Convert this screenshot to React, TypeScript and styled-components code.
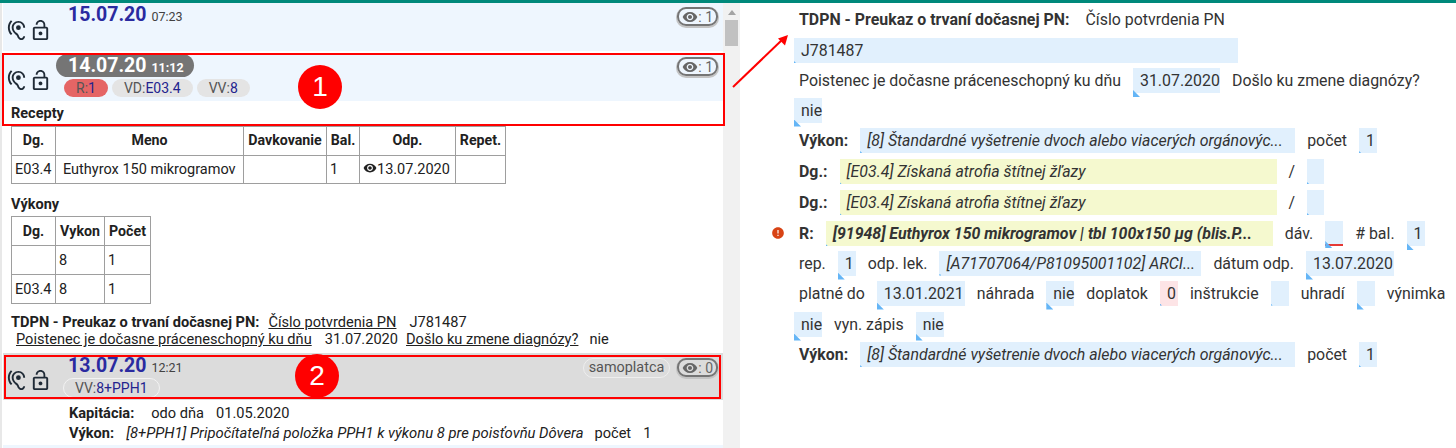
import React from "react";
import styled, { createGlobalStyle } from "styled-components";
import { MdHearing, MdLockOpen, MdVisibility, MdError } from "react-icons/md";

const Global = createGlobalStyle`
  html, body { margin: 0; padding: 0; background: #fff; }
  body { font-family: Roboto, "Liberation Sans", sans-serif; font-size: 14.6px; color: #212121; overflow: hidden; }
`;
const Page = styled.div`
  position: relative; width: 1456px; height: 448px; overflow: hidden;
  border-top: 3px solid #00897b; box-sizing: border-box; display: flex;
`;
const Left = styled.div`
  width: 723px; height: 445px; flex: none; overflow: hidden; padding-left: 1px; box-sizing: border-box;
  border-left: 2px solid #e8e8e8;
`;
const Scrollbar = styled.div`
  width: 17px; flex: none; height: 445px; background: #f1f1f1; display: flex; flex-direction: column; align-items: center;
  &::before { content: ""; margin-top: 7px; border: 4px solid transparent; border-top: 0; border-bottom: 5px solid #a3a3a3; }
  &::after { content: ""; margin-top: 5px; width: 13px; height: 26px; background: #c1c1c1; }
`;
const Head = styled.div<{ $h: number; $grey?: boolean; $mb?: number; $mt?: number }>`
  height: ${p => p.$h}px; margin: ${p => p.$mt ?? 0}px 0 ${p => p.$mb ?? 0}px; display: flex; position: relative;
  background: ${p => (p.$grey ? "#dcdcdc" : "#eef6fe")};
`;
const Icons = styled.div<{ $top: number }>`
  width: 55px; flex: none; display: flex; align-items: flex-start; padding: ${p => p.$top}px 0 0 2px; box-sizing: border-box; gap: 1px;
  color: #1f2a36;
  svg { display: block; flex: none; }
`;
const Info = styled.div<{ $pt: number }>`
  padding-top: ${p => p.$pt}px; display: flex; flex-direction: column; align-items: flex-start;
`;
const DateLine = styled.div<{ $pill?: boolean }>`
  font-size: 19.5px; font-weight: 700; white-space: nowrap;
  line-height: ${p => (p.$pill ? 23 : 22)}px; height: ${p => (p.$pill ? 23 : 22)}px;
  color: ${p => (p.$pill ? "#fff" : "#2a2aa0")};
  ${p => p.$pill ? "background:#757575;border-radius:12px;padding:0 10px 0 12px;margin:-1px 0 0 -2px;" : "margin-left:10px;"}
`;
const Time = styled.span<{ $bold?: boolean }>`
  font-size: 12.5px; font-weight: ${p => (p.$bold ? 700 : 400)}; margin-left: 5px;
  color: ${p => (p.$bold ? "#fff" : "#424242")};
`;
const Chips = styled.div<{ $mt: number; $ml: number }>`
  display: flex; gap: 4px; margin: ${p => p.$mt}px 0 0 ${p => p.$ml}px;
`;
const Chip = styled.span<{ $red?: boolean; $outline?: boolean }>`
  font-size: 14px; line-height: 18px; height: 18px; padding: 0 ${p => (p.$outline ? 11 : 12)}px; border-radius: 10px; color: #555; display: inline-block;
  background: ${p => (p.$red ? "#e56565" : p.$outline ? "#dcdcdc" : "#e4e4e4")};
  ${p => p.$outline ? "border:1px solid #f3f3f3;" : ""}
  b { font-weight: 400; color: #23238e; }
`;
const Right = styled.div<{ $top: number }>`
  position: absolute; right: 5px; top: ${p => p.$top}px; display: flex; gap: 7px; align-items: flex-start;
`;
const Tag = styled.span`
  font-size: 14.4px; height: 18px; line-height: 18px; border-radius: 10px; border: 1px solid #eee; color: #555; padding: 0 5px;
`;
const Seen = styled.span`
  display: inline-flex; align-items: center; height: 15px; padding: 0 3px 0 3px; border: 2px solid #757575; border-radius: 9px;
  font-size: 14px; color: #666; box-shadow: 0 1px 0 1px #c4c4c4; svg { color: #666; }
`;
const SectionTitle = styled.div<{ $mt?: number }>`
  font-weight: 700; font-size: 14.5px; line-height: 18px; margin: ${p => p.$mt ?? 0}px 0 0 8px;
`;
const Table = styled.table<{ $w: number; $mt: number; $rh: number }>`
  border-collapse: collapse; table-layout: fixed; width: ${p => p.$w}px; margin: ${p => p.$mt}px 0 0 8px; font-size: 14.5px; line-height: 17px;
  th, td { border: 1px solid #9e9e9e; padding: 0 3px; height: ${p => p.$rh}px; box-sizing: border-box; white-space: nowrap; }
  th { text-align: center; font-weight: 700; font-size: 14.2px; }
  td { text-align: left; }
  svg { vertical-align: -1px; }
`;
const Col = styled.col<{ $w: number }>`width: ${p => p.$w}px;`;
const NameCell = styled.td`padding-left: 7px !important;`;
const TextLine = styled.div<{ $ml: number; $mt?: number }>`
  margin: ${p => p.$mt ?? 0}px 0 0 ${p => p.$ml}px; line-height: 17px; white-space: nowrap; font-size: 14.6px; display: flex;
  b { font-weight: 700; }
  i { font-size: 14.8px; }
  u { text-underline-offset: 1px; }
`;
const Sp = styled.span<{ $l: number }>`margin-left: ${p => p.$l}px;`;
const Detail = styled.div`
  flex: 1; padding: 1px 0 0 54px; min-width: 0; display: flex; flex-direction: column;
  font-size: 15.9px; color: #333;
`;
const Line = styled.div<{ $h: number; $o?: number }>`
  height: ${p => p.$h}px; display: flex; align-items: center; white-space: nowrap; position: relative;
  margin-left: ${p => p.$o ?? 0}px;
`;
const Lab = styled.span<{ $mr?: number; $bold?: boolean }>`
  margin-right: ${p => p.$mr ?? 12}px; font-weight: ${p => (p.$bold ? 700 : 400)}; flex: none;
`;
const Field = styled.span<{ $w: number; $mr?: number; $y?: boolean; $pink?: boolean; $it?: boolean; $strong?: boolean; $err?: boolean; $tri?: boolean }>`
  width: ${p => p.$w}px; height: 25px; line-height: 25px; flex: none; box-sizing: border-box; padding-left: 7px;
  margin-right: ${p => p.$mr ?? 12}px; position: relative; display: inline-block;
  background: ${p => (p.$y ? "#f5f9cf" : p.$pink ? "#fde4e6" : "#e1f0fd")};
  font-style: ${p => (p.$it ? "italic" : "normal")}; font-weight: ${p => (p.$strong ? 700 : 400)};
  ${p => p.$err ? "border-bottom:2px solid #e53935;" : ""}
  &::after {
    content: ""; position: absolute; left: 0;
    top: calc(100% - ${p => (p.$tri ? 3 : 2)}px);
    width: ${p => (p.$tri ? 7 : 2)}px; height: ${p => (p.$tri ? 7 : 2)}px;
    background: #64b5f6; clip-path: polygon(0 0, 100% 100%, 0 100%);
  }
`;
const Alert = styled.span`
  position: absolute; left: -28px; top: 8px; color: #d84315; display: flex;
`;
const RedBox = styled.div<{ $l: number; $t: number; $w: number; $h: number }>`
  position: absolute; left: ${p => p.$l}px; top: ${p => p.$t}px; width: ${p => p.$w}px; height: ${p => p.$h}px;
  border: 2px solid #f00; box-sizing: border-box; pointer-events: none;
`;
const Badge = styled.div<{ $l: number; $t: number }>`
  position: absolute; left: ${p => p.$l}px; top: ${p => p.$t}px; width: 44px; height: 44px; border-radius: 50%; background: #f00; color: #fff;
  font-family: "Liberation Sans", sans-serif; font-size: 28px; line-height: 44px; text-align: center;
`;
const Arrow = styled.svg`
  position: absolute; left: 730px; top: 28px; overflow: visible;
`;

const HeadIcons = ({ top }: { top: number }) => (
  <Icons $top={top}>
    <MdHearing size={23} />
    <MdLockOpen size={23} />
  </Icons>
);
const Eye = ({ n }: { n: number }) => (
  <Seen><MdVisibility size={16} />: {n}</Seen>
);

export default function App() {
  return (
    <Page>
      <Global />
      <Left>
        <Head $h={48} $mb={4}>
          <HeadIcons top={16} />
          <Info $pt={1}><DateLine>15.07.20<Time>07:23</Time></DateLine></Info>
          <Right $top={4}><Eye n={1} /></Right>
        </Head>
        <Head $h={46}>
          <HeadIcons top={14} />
          <Info $pt={0}>
            <DateLine $pill>14.07.20<Time $bold>11:12</Time></DateLine>
            <Chips $mt={2} $ml={6}>
              <Chip $red>R:<b>1</b></Chip>
              <Chip>VD:<b>E03.4</b></Chip>
              <Chip>VV:<b>8</b></Chip>
            </Chips>
          </Info>
          <Right $top={2}><Eye n={1} /></Right>
        </Head>
        <SectionTitle $mt={4}>Recepty</SectionTitle>
        <Table $w={494} $mt={3} $rh={28.5}>
          <colgroup><Col $w={44} /><Col $w={188} /><Col $w={83} /><Col $w={33} /><Col $w={96} /><Col $w={50} /></colgroup>
          <thead><tr><th>Dg.</th><th>Meno</th><th>Davkovanie</th><th>Bal.</th><th>Odp.</th><th>Repet.</th></tr></thead>
          <tbody><tr><td>E03.4</td><NameCell>Euthyrox 150 mikrogramov</NameCell><td></td><td>1</td><td><MdVisibility size={14} />13.07.2020</td><td></td></tr></tbody>
        </Table>
        <SectionTitle $mt={12}>Výkony</SectionTitle>
        <Table $w={139} $mt={2} $rh={29}>
          <colgroup><Col $w={44} /><Col $w={49} /><Col $w={46} /></colgroup>
          <thead><tr><th>Dg.</th><th>Vykon</th><th>Počet</th></tr></thead>
          <tbody>
            <tr><td></td><td>8</td><td>1</td></tr>
            <tr><td>E03.4</td><td>8</td><td>1</td></tr>
          </tbody>
        </Table>
        <TextLine $ml={8} $mt={10}><b>TDPN - Preukaz o trvaní dočasnej PN:</b><Sp $l={9}><u>Číslo potvrdenia PN</u></Sp><Sp $l={13}>J781487</Sp></TextLine>
        <TextLine $ml={13}><u>Poistenec je dočasne práceneschopný ku dňu</u><Sp $l={13}>31.07.2020</Sp><Sp $l={8}><u>Došlo ku zmene diagnózy?</u></Sp><Sp $l={11}>nie</Sp></TextLine>
        <Head $h={47} $grey $mt={5}>
          <HeadIcons top={16} />
          <Info $pt={2}>
            <DateLine>13.07.20<Time>12:21</Time></DateLine>
            <Chips $mt={1} $ml={5}><Chip $outline>VV:<b>8+PPH1</b></Chip></Chips>
          </Info>
          <Right $top={5}><Tag>samoplatca</Tag><Eye n={0} /></Right>
        </Head>
        <TextLine $ml={66} $mt={5}><b>Kapitácia:</b><Sp $l={17}>odo dňa</Sp><Sp $l={12}>01.05.2020</Sp></TextLine>
        <TextLine $ml={66} $mt={3}><b>Výkon:</b><Sp $l={12}><i>[8+PPH1] Pripočítateľná položka PPH1 k výkonu 8 pre poisťovňu Dôvera</i></Sp><Sp $l={11}>počet</Sp><Sp $l={12}>1</Sp></TextLine>
        <Head $h={40} $mt={3} />
      </Left>
      <Scrollbar />
      <Detail>
        <Line $o={5} $h={31}><Lab $bold $mr={16}>TDPN - Preukaz o trvaní dočasnej PN:</Lab><Lab>Číslo potvrdenia PN</Lab></Line>
        <Line $h={31}><Field $w={444} $mr={0}>J781487</Field></Line>
        <Line $o={5} $h={29}><Lab>Poistenec je dočasne práceneschopný ku dňu</Lab><Field $w={87} $tri>31.07.2020</Field><Lab>Došlo ku zmene diagnózy?</Lab></Line>
        <Line $h={30}><Field $w={28} $tri>nie</Field></Line>
        <Line $o={5} $h={31}><Lab $bold>Výkon:</Lab><Field $w={435} $it>[8] Štandardné vyšetrenie dvoch alebo viacerých orgánovýc...</Field><Lab>počet</Lab><Field $w={18}>1</Field></Line>
        <Line $o={5} $h={31}><Lab $bold>Dg.:</Lab><Field $w={437} $y $it>[E03.4] Získaná atrofia štítnej žľazy</Field><Lab>/</Lab><Field $w={17} /></Line>
        <Line $o={5} $h={31}><Lab $bold>Dg.:</Lab><Field $w={437} $y $it>[E03.4] Získaná atrofia štítnej žľazy</Field><Lab>/</Lab><Field $w={17} /></Line>
        <Line $o={5} $h={31}><Alert><MdError size={14} /></Alert><Lab $bold>R:</Lab><Field $w={447} $y $it $strong>[91948] Euthyrox 150 mikrogramov | tbl 100x150 µg (blis.P...</Field><Lab>dáv.</Lab><Field $w={18} $err $tri /><Lab># bal.</Lab><Field $w={18} $tri>1</Field></Line>
        <Line $o={5} $h={28}><Lab>rep.</Lab><Field $w={18} $tri>1</Field><Lab>odp. lek.</Lab><Field $w={262} $it>[A71707064/P81095001102] ARCI...</Field><Lab>dátum odp.</Lab><Field $w={88} $tri>13.07.2020</Field></Line>
        <Line $o={5} $h={32}><Lab>platné do</Lab><Field $w={88} $tri>13.01.2021</Field><Lab>náhrada</Lab><Field $w={28} $tri>nie</Field><Lab>doplatok</Lab><Field $w={18} $pink>0</Field><Lab>inštrukcie</Lab><Field $w={18} /><Lab>uhradí</Lab><Field $w={18} $tri /><Lab>výnimka</Lab></Line>
        <Line $h={30}><Field $w={28} $tri>nie</Field><Lab>vyn. zápis</Lab><Field $w={28} $tri>nie</Field></Line>
        <Line $o={5} $h={31}><Lab $bold>Výkon:</Lab><Field $w={435} $it>[8] Štandardné vyšetrenie dvoch alebo viacerých orgánovýc...</Field><Lab>počet</Lab><Field $w={18}>1</Field></Line>
      </Detail>
      <RedBox $l={2} $t={50} $w={723} $h={73} />
      <RedBox $l={4} $t={352} $w={717} $h={44} />
      <Badge $l={298} $t={62}>1</Badge>
      <Badge $l={295} $t={351}>2</Badge>
      <Arrow width="60" height="60" viewBox="0 0 60 60">
        <path d="M3 56 L 53 8" stroke="#f00" strokeWidth="2" fill="none" />
        <path d="M58 4 L 48 7.5 L 55 14.5 Z" fill="#f00" />
      </Arrow>
    </Page>
  );
}
